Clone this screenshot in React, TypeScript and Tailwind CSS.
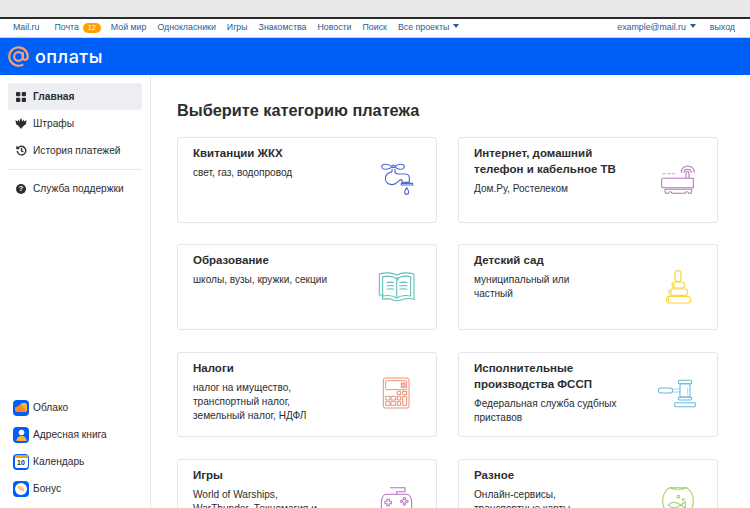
import type { ReactNode } from "react";

const font = "font-['Liberation_Sans',Arial,sans-serif]";

// card pictures are drawn in 3x units, 45x60 px on the page
function Tap() {
  return (
    <svg width="45" height="60" viewBox="45 0 135 180" fill="none" stroke="#5468d0" strokeWidth="3.4" strokeLinejoin="round">
      <path d="M97 50c-8-6-22-9-28-6-6 3-5 11 2 13 9 2 20-1 26-7zM104 50c8-6 20-9 26-6 5 3 4 11-3 13-9 2-18-1-23-7z" />
      <circle cx="100" cy="49" r="4" />
      <path d="M96 57v8c-12 3-20 11-20 21 0 11 9 18 19 18 11 0 17-6 22-12 2-2 5-3 9-3v8h22V84c0-8-5-12-13-12h-19c-6 0-9-2-11-5V57" />
      <path d="M124 100h34v5h-34zM140 113c-4 6-6 10-6 14a6 6 0 0 0 12 0c0-4-2-8-6-14z" />
    </svg>
  );
}

function Router() {
  return (
    <svg width="45" height="60" viewBox="48 0 135 180" fill="none" stroke="#b873bb" strokeWidth="3.2">
      <path d="M67 71h10M82 71h10M96 71h10" stroke="#cf9fd1" />
      <path d="M70 85h90v28H70c-3 0-5-2-5-5V90c0-3 2-5 5-5z" />
      <path d="M75 118h80v7c0 3-2 5-5 5h-4c-1-6-10-6-11 0H96c-1-6-10-6-11 0h-5c-3 0-5-2-5-5z" />
      <path d="M138 85V68c0-6 9-6 9 0v17" />
      <path d="M132 68c0-14 22-14 22 0M124 68c0-27 39-27 39 0" />
    </svg>
  );
}

function Book() {
  return (
    <svg width="45" height="60" viewBox="45 -9 135 180" fill="none" stroke="#5cbfb8" strokeWidth="3.2">
      <path d="M68 118V105H58V42c18-5 38-4 52 3 14-7 34-8 52-3v76c-16-4-26-3-36 1-10 4-22 4-32-1-8-3-16-3-26 0z" />
      <path d="M68 105V50c14-3 30-2 42 6 12-8 28-9 42-6v58c-14-3-30-2-42 6-12-8-28-9-42-6" />
      <path d="M110 62v50" />
      <circle cx="112" cy="57" r="3.500" />
      <path d="M80 68c7-2 15-2 22 0M80 78c7-2 15-2 22 0M80 88c7-2 15-2 22 0M118 68c7-2 16-2 24 0M118 78c7-2 16-2 24 0M118 88c7-2 16-2 24 0" />
    </svg>
  );
}

function Pyramid() {
  return (
    <svg width="45" height="60" viewBox="48 -9 135 180" fill="none" stroke="#fbd440" strokeWidth="3.400">
      <rect x="105" y="32" width="18" height="33" rx="9" />
      <rect x="96" y="66" width="38" height="18" rx="9" />
      <rect x="87" y="87" width="56" height="19" rx="9.500" />
      <rect x="79" y="109" width="73" height="20" rx="10" />
      <path d="M104 71c-3 3-3 6 0 9M95 92c-3 3-3 6 0 9M87 114c-3 3-3 7 0 10" />
    </svg>
  );
}

function Calc() {
  return (
    <svg width="45" height="60" viewBox="45 -2 135 180" fill="none" stroke="#e88f76" strokeWidth="3">
      <rect x="70" y="40" width="77" height="90" rx="6" />
      <rect x="77" y="48" width="63" height="27" rx="3" />
      <rect x="124" y="55" width="11" height="13" fill="#f5c4b5" />
      <path d="M112 80h10v10h-10zM128 80h12v10h-12zM77 95h13v11H77zM93 95h14v11H93zM112 95h10v11h-10zM77 111h13v11H77zM93 111h14v11H93zM112 111h10v11h-10zM128 95h12v27h-12z" />
    </svg>
  );
}

function Gavel() {
  return (
    <svg width="45" height="60" viewBox="48 -2 135 180" fill="none" stroke="#6cb6df" strokeWidth="3.200">
      <rect x="55" y="70" width="43" height="15" rx="7.500" />
      <path d="M98 73h22M98 82h22" stroke="#a9d6ef" strokeWidth="3.600" />
      <path d="M120 57h30v40h-30z" />
      <rect x="115" y="47" width="40" height="10" rx="4" />
      <rect x="115" y="97" width="40" height="9" rx="4" />
      <path d="M143 70v20" stroke="#a9d6ef" />
      <rect x="104" y="114" width="62" height="12" rx="2" />
    </svg>
  );
}

function Gamepad() {
  return (
    <svg width="45" height="60" viewBox="45 -4 135 180" fill="none" stroke="#b870c9" strokeWidth="3.200">
      <path d="M90 43h45v12h-25v8" />
      <path d="M80 63h60c9 0 15 10 15 30s-3 37-14 37c-10 0-12-18-24-18h-16c-12 0-15 18-25 18-10 0-12-17-12-37s7-30 16-30z" />
      <path d="M81 78h7v6h6v7h-6v6h-7v-6h-6v-7h6z" />
      <circle cx="133" cy="76" r="3.500" />
      <circle cx="133" cy="92" r="3.500" />
      <circle cx="125" cy="84" r="3.500" />
      <circle cx="141" cy="84" r="3.500" />
    </svg>
  );
}

function Aquarium() {
  return (
    <svg width="45" height="60" viewBox="48 -4 135 180" fill="none" stroke="#9fce63" strokeWidth="3.200">
      <path d="M88 43h52c12 9 20 22 20 40 0 27-20 47-46 47s-46-20-46-47c0-18 8-31 20-40z" />
      <path d="M88 43c14 6 38 6 52 0" />
      <circle cx="115" cy="70" r="4" />
      <circle cx="130" cy="79" r="2.500" />
      <path d="M85 95c10-11 26-11 36 0-10 11-26 11-36 0zM121 95l15-9v18z" />
    </svg>
  );
}

const cards: { title: string[]; desc: string[]; icon: ReactNode }[] = [
  { title: ["Квитанции ЖКХ"], desc: ["свет, газ, водопровод"], icon: <Tap /> },
  { title: ["Интернет, домашний", "телефон и кабельное ТВ"], desc: ["Дом.Ру, Ростелеком"], icon: <Router /> },
  { title: ["Образование"], desc: ["школы, вузы, кружки, секции"], icon: <Book /> },
  { title: ["Детский сад"], desc: ["муниципальный или", "частный"], icon: <Pyramid /> },
  { title: ["Налоги"], desc: ["налог на имущество,", "транспортный налог,", "земельный налог, НДФЛ"], icon: <Calc /> },
  { title: ["Исполнительные", "производства ФССП"], desc: ["Федеральная служба судбных", "приставов"], icon: <Gavel /> },
  { title: ["Игры"], desc: ["World of Warships,", "WarThunder, Техномагия и"], icon: <Gamepad /> },
  { title: ["Разное"], desc: ["Онлайн-сервисы,", "транспортные карты"], icon: <Aquarium /> },
];

const navLinks = ["Мой мир", "Однокласники", "Игры", "Знакомства", "Новости", "Поиск"];

function Caret() {
  return <span className="ml-[4px] inline-block border-x-[3px] border-t-[4px] border-x-transparent border-t-[#2a5a9e] align-[2px]" />;
}

function TopBar() {
  return (
    <div className="flex h-[19px] items-center justify-between border-b border-[#bcd5f5] pl-[13px] pr-[15px] text-[8.800px] text-[#2a5a9e]">
      <div className="flex items-center">
        <span className="mr-[15px]">Mail.ru</span>
        <span>Почта</span>
        <span className="ml-[4px] mr-[10px] flex h-[10px] w-[18px] items-center justify-center rounded-full bg-[#ff9e00] text-[7.500px] text-white">12</span>
        <div className="flex items-center gap-[11px]">
          {navLinks.map((l) => (
            <span key={l}>{l}</span>
          ))}
          <span>
            Все проекты
            <Caret />
          </span>
        </div>
      </div>
      <div className="flex items-center gap-[14px]">
        <span>
          example@mail.ru
          <Caret />
        </span>
        <span>выход</span>
      </div>
    </div>
  );
}

function SideItem({ icon, label, active }: { icon: ReactNode; label: string; active?: boolean }) {
  return (
    <div className={`flex h-[27px] items-center gap-[7px] rounded-[3px] pl-[8px] text-[10.200px] ${active ? "bg-[#eceef1] font-bold" : ""}`}>
      <span className="flex w-[10px] justify-center">{icon}</span>
      <span>{label}</span>
    </div>
  );
}

function AppItem({ icon, label }: { icon: ReactNode; label: string }) {
  return (
    <div className="flex h-[27px] items-center gap-[4px] pl-[13px] text-[10.200px]">
      <span className="flex h-[16px] w-[16px] items-center justify-center rounded-[4px] bg-[#005ff9]">{icon}</span>
      <span>{label}</span>
    </div>
  );
}

function Sidebar() {
  return (
    <aside className="flex w-[151px] shrink-0 flex-col justify-between border-r border-[#e8e9eb] pb-[6px] pt-[8px] text-[#2c2d2e]">
      <div className="px-[8px]">
        <SideItem
          active
          label="Главная"
          icon={
            <svg width="10" height="10" viewBox="0 0 10 10" fill="#2c2d2e">
              <rect width="4.300" height="4.300" rx="1" />
              <rect x="5.700" width="4.300" height="4.300" rx="1" />
              <rect y="5.700" width="4.300" height="4.300" rx="1" />
              <rect x="5.700" y="5.700" width="4.300" height="4.300" rx="1" />
            </svg>
          }
        />
        <SideItem
          label="Штрафы"
          icon={
            <svg width="12" height="11" viewBox="0 0 12 11" fill="#2c2d2e" className="shrink-0">
              <path d="M6 0L7 2L7.500 4L8.500 1.500L9.500 3.500L11.500 2L11 6L8.500 8L7.500 9L6 11L4.500 9L3.500 8L1 6L.5 2L2.500 3.500L3.500 1.500L4.500 4L5 2Z" />
            </svg>
          }
        />
        <SideItem
          label="История платежей"
          icon={
            <svg width="11" height="11" viewBox="0 0 12 12" fill="none" stroke="#2c2d2e" strokeWidth="1.500" className="shrink-0">
              <path d="M2.300 3.200A4.700 4.700 0 1 1 1.300 6.500M1 1.300v2.500h2.500M6 3.300v3l2 1.200" />
            </svg>
          }
        />
        <div className="my-[5px] border-t border-[#e8e9eb]" />
        <SideItem
          label="Служба поддержки"
          icon={
            <span className="flex h-[10px] w-[10px] items-center justify-center rounded-full bg-[#2c2d2e] text-[8px] font-bold leading-none text-white">?</span>
          }
        />
      </div>
      <div>
        <AppItem
          label="Облако"
          icon={
            <svg width="12" height="9" viewBox="0 0 12 9">
              <path d="M5 7a3 3 0 0 1 .5-5.500A3.500 3.500 0 0 1 11.800 5 2.500 2.500 0 0 1 9.500 9H5z" fill="#ffb03a" />
              <path d="M2.800 9a2.800 2.800 0 0 1-.3-5.600A3.300 3.300 0 0 1 8.500 5 2 2 0 0 1 8 9z" fill="#ff8a1f" />
            </svg>
          }
        />
        <AppItem
          label="Адресная книга"
          icon={
            <svg width="11" height="12" viewBox="0 0 11 12">
              <circle cx="5.500" cy="3.500" r="2.800" fill="#fff" />
              <path d="M.5 12c0-3.500 2-5 5-5s5 1.500 5 5z" fill="#ffb03a" />
            </svg>
          }
        />
        <AppItem
          label="Календарь"
          icon={
            <span className="flex h-[13px] w-[13px] flex-col overflow-hidden rounded-[2px] bg-white">
              <span className="h-[3px] shrink-0 bg-[#ff9e00]" />
              <span className="text-center text-[7px] font-bold leading-[10px] text-[#2c2d2e]">10</span>
            </span>
          }
        />
        <AppItem
          label="Бонус"
          icon={
            <span className="flex h-[12px] w-[12px] items-center justify-center rounded-full border border-dotted border-white bg-white text-[7px] font-bold leading-none text-[#ff9e00]">%</span>
          }
        />
      </div>
    </aside>
  );
}

export default function App() {
  return (
    <div className={`flex h-[508px] w-[750px] flex-col overflow-hidden bg-white ${font}`}>
      <div className="h-[19px] shrink-0 border-b-2 border-[#2b2b2b] bg-[#e8e8e8]" />
      <TopBar />
      <header className="flex h-[37px] shrink-0 items-center gap-[6px] bg-[#005ff9] pl-[8px]">
        <svg width="21" height="21" viewBox="0 0 24 24" fill="none" stroke="#ff9e6b" strokeWidth="2.500">
          <circle cx="12" cy="12" r="5" />
          <path d="M17 7v6.500c0 3.500 5.500 3.500 5.500-1.500A10.500 10.500 0 1 0 17.500 21" />
        </svg>
        <span className="font-['Inter',sans-serif] text-[18px] font-medium leading-none tracking-[0.5px] text-white">оплаты</span>
      </header>
      <div className="flex min-h-0 flex-1">
        <Sidebar />
        <main className="flex-1 pl-[26px] pt-[25px]">
          <h1 className="mb-[17px] text-[16.300px] font-bold leading-[20px] text-[#2c2d2e]">Выберите категорию платежа</h1>
          <div className="grid grid-cols-[260px_260px] gap-x-[21px] gap-y-[21.800px]">
            {cards.map((c) => (
              <div key={c.title[0]} className="flex h-[85.500px] items-center justify-between rounded-[3px] border border-[#e4e5e8] pl-[15px] pr-[16px] text-[#2c2d2e]">
                <div className="h-full pt-[7px]">
                  <div className="mb-[5px] text-[11.500px] font-bold leading-[16px]">
                    {c.title.map((t) => (
                      <div key={t}>{t}</div>
                    ))}
                  </div>
                  <div className="text-[10.100px] leading-[14px]">
                    {c.desc.map((d) => (
                      <div key={d}>{d}</div>
                    ))}
                  </div>
                </div>
                {c.icon}
              </div>
            ))}
          </div>
        </main>
      </div>
    </div>
  );
}
